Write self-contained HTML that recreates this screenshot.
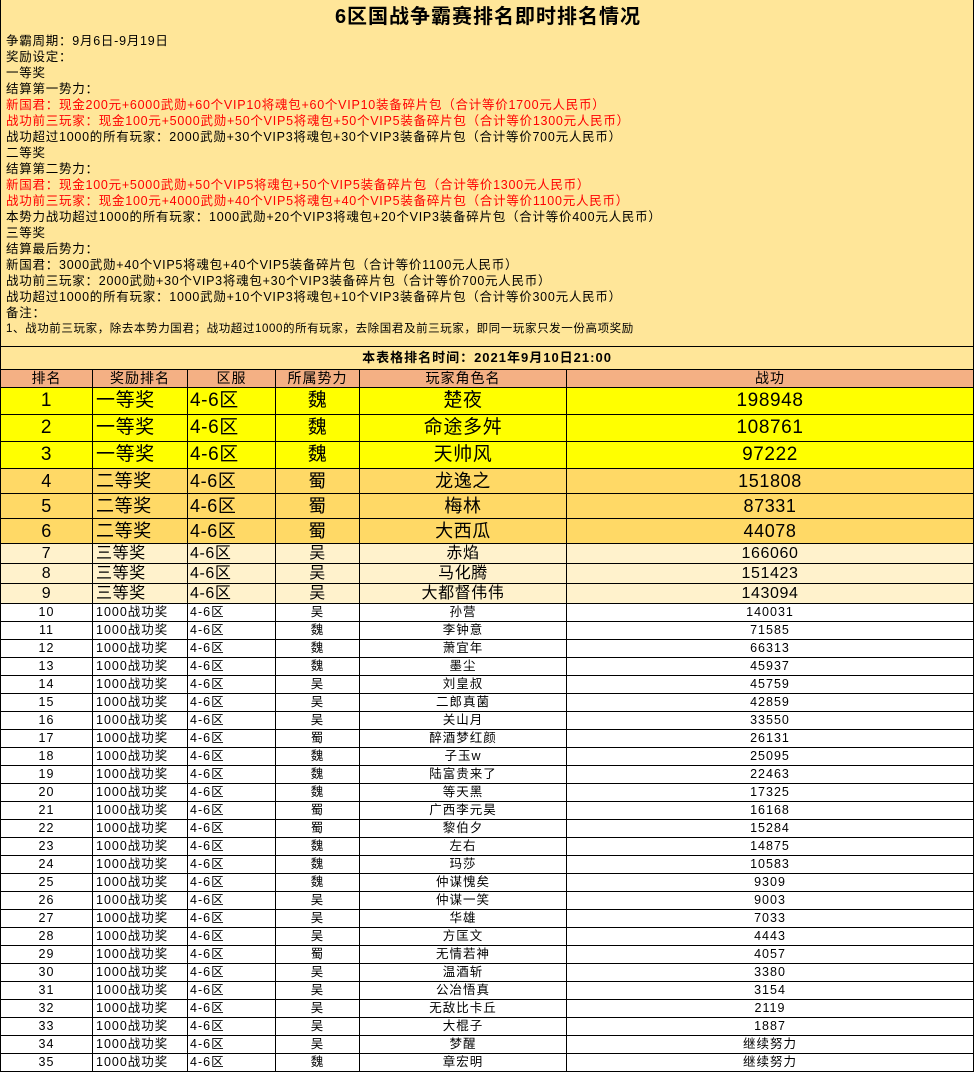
<!DOCTYPE html>
<html><head><meta charset="utf-8">
<style>
*{margin:0;padding:0;box-sizing:border-box}
body{width:977px;height:1076px;background:#fff;font-family:"Liberation Sans","Noto Sans CJK SC",sans-serif;color:#000;position:relative;overflow:hidden}
#top{position:absolute;left:0;top:0;width:974px;height:347px;background:#FFE699;border-left:1px solid #000;border-right:1px solid #000;border-bottom:1px solid #000}
#title{position:absolute;left:0;width:974px;top:4px;text-align:center;font-weight:bold;font-size:20px;line-height:26px;letter-spacing:1px}
.ln{position:absolute;left:5px;font-size:12.5px;line-height:16px;white-space:nowrap;letter-spacing:0.75px}
.r{color:#f00}
#tt{position:absolute;left:0;top:347px;width:974px;height:22px;background:#FFE699;border-left:1px solid #000;border-right:1px solid #000;text-align:center;font-weight:bold;font-size:13px;line-height:22px;letter-spacing:1px}
.row{position:absolute;left:0;width:974px;display:flex;border-top:1px solid #000;letter-spacing:0.6px}
.row div{border-left:1px solid #000;height:100%;white-space:nowrap;overflow:hidden;text-align:center}
.row div:last-child{border-right:1px solid #000}
.c1{width:92px}.c2{width:95px;text-align:left!important;padding-left:3px}.c3{width:88px;text-align:left!important;padding-left:2px}.c4{width:84px}.c5{width:207px}.c6{width:408px}
.h{background:#F4B084;font-size:14px;line-height:17px;letter-spacing:1px}
.y{background:#FFFF00;font-size:19px;line-height:26px}
.o{background:#FFD966;font-size:18px;line-height:24px}
.l{background:#FFF2CC;font-size:16px;line-height:19px}
.w{background:#fff;font-size:12.5px;line-height:17px;letter-spacing:1px}
</style></head><body>
<div id="top">
<div id="title">6区国战争霸赛排名即时排名情况</div>
<div class="ln" style="top:33px">争霸周期：9月6日-9月19日</div>
<div class="ln" style="top:49px">奖励设定：</div>
<div class="ln" style="top:65px">一等奖</div>
<div class="ln" style="top:81px">结算第一势力：</div>
<div class="ln r" style="top:97px">新国君：现金200元+6000武勋+60个VIP10将魂包+60个VIP10装备碎片包（合计等价1700元人民币）</div>
<div class="ln r" style="top:113px">战功前三玩家：现金100元+5000武勋+50个VIP5将魂包+50个VIP5装备碎片包（合计等价1300元人民币）</div>
<div class="ln" style="top:129px">战功超过1000的所有玩家：2000武勋+30个VIP3将魂包+30个VIP3装备碎片包（合计等价700元人民币）</div>
<div class="ln" style="top:145px">二等奖</div>
<div class="ln" style="top:161px">结算第二势力：</div>
<div class="ln r" style="top:177px">新国君：现金100元+5000武勋+50个VIP5将魂包+50个VIP5装备碎片包（合计等价1300元人民币）</div>
<div class="ln r" style="top:193px">战功前三玩家：现金100元+4000武勋+40个VIP5将魂包+40个VIP5装备碎片包（合计等价1100元人民币）</div>
<div class="ln" style="top:209px">本势力战功超过1000的所有玩家：1000武勋+20个VIP3将魂包+20个VIP3装备碎片包（合计等价400元人民币）</div>
<div class="ln" style="top:225px">三等奖</div>
<div class="ln" style="top:241px">结算最后势力：</div>
<div class="ln" style="top:257px">新国君：3000武勋+40个VIP5将魂包+40个VIP5装备碎片包（合计等价1100元人民币）</div>
<div class="ln" style="top:273px">战功前三玩家：2000武勋+30个VIP3将魂包+30个VIP3装备碎片包（合计等价700元人民币）</div>
<div class="ln" style="top:289px">战功超过1000的所有玩家：1000武勋+10个VIP3将魂包+10个VIP3装备碎片包（合计等价300元人民币）</div>
<div class="ln" style="top:305px">备注：</div>
<div class="ln" style="top:321px;font-size:11.5px;letter-spacing:0.6px">1、战功前三玩家，除去本势力国君；战功超过1000的所有玩家，去除国君及前三玩家，即同一玩家只发一份高项奖励</div>
</div>
<div id="tt">本表格排名时间：2021年9月10日21:00</div>

<div class="row h" style="top:369px;height:19px"><div class="c1">排名</div><div class="c2" style="text-align:center!important;padding:0">奖励排名</div><div class="c3" style="text-align:center!important;padding:0">区服</div><div class="c4">所属势力</div><div class="c5">玩家角色名</div><div class="c6">战功</div></div>

<div class="row y" style="top:387px;height:28px"><div class="c1">1</div><div class="c2">一等奖</div><div class="c3">4-6区</div><div class="c4">魏</div><div class="c5">楚夜</div><div class="c6">198948</div></div>
<div class="row y" style="top:414px;height:28px"><div class="c1">2</div><div class="c2">一等奖</div><div class="c3">4-6区</div><div class="c4">魏</div><div class="c5">命途多舛</div><div class="c6">108761</div></div>
<div class="row y" style="top:441px;height:28px"><div class="c1">3</div><div class="c2">一等奖</div><div class="c3">4-6区</div><div class="c4">魏</div><div class="c5">天帅风</div><div class="c6">97222</div></div>
<div class="row o" style="top:468px;height:26px"><div class="c1">4</div><div class="c2">二等奖</div><div class="c3">4-6区</div><div class="c4">蜀</div><div class="c5">龙逸之</div><div class="c6">151808</div></div>
<div class="row o" style="top:493px;height:26px"><div class="c1">5</div><div class="c2">二等奖</div><div class="c3">4-6区</div><div class="c4">蜀</div><div class="c5">梅林</div><div class="c6">87331</div></div>
<div class="row o" style="top:518px;height:26px"><div class="c1">6</div><div class="c2">二等奖</div><div class="c3">4-6区</div><div class="c4">蜀</div><div class="c5">大西瓜</div><div class="c6">44078</div></div>
<div class="row l" style="top:543px;height:21px"><div class="c1">7</div><div class="c2">三等奖</div><div class="c3">4-6区</div><div class="c4">吴</div><div class="c5">赤焰</div><div class="c6">166060</div></div>
<div class="row l" style="top:563px;height:21px"><div class="c1">8</div><div class="c2">三等奖</div><div class="c3">4-6区</div><div class="c4">吴</div><div class="c5">马化腾</div><div class="c6">151423</div></div>
<div class="row l" style="top:583px;height:21px"><div class="c1">9</div><div class="c2">三等奖</div><div class="c3">4-6区</div><div class="c4">吴</div><div class="c5">大都督伟伟</div><div class="c6">143094</div></div>

<div class="row w" style="top:603px;height:19px"><div class="c1">10</div><div class="c2">1000战功奖</div><div class="c3">4-6区</div><div class="c4">吴</div><div class="c5">孙营</div><div class="c6">140031</div></div>
<div class="row w" style="top:621px;height:19px"><div class="c1">11</div><div class="c2">1000战功奖</div><div class="c3">4-6区</div><div class="c4">魏</div><div class="c5">李钟意</div><div class="c6">71585</div></div>
<div class="row w" style="top:639px;height:19px"><div class="c1">12</div><div class="c2">1000战功奖</div><div class="c3">4-6区</div><div class="c4">魏</div><div class="c5">萧宜年</div><div class="c6">66313</div></div>
<div class="row w" style="top:657px;height:19px"><div class="c1">13</div><div class="c2">1000战功奖</div><div class="c3">4-6区</div><div class="c4">魏</div><div class="c5">墨尘</div><div class="c6">45937</div></div>
<div class="row w" style="top:675px;height:19px"><div class="c1">14</div><div class="c2">1000战功奖</div><div class="c3">4-6区</div><div class="c4">吴</div><div class="c5">刘皇叔</div><div class="c6">45759</div></div>
<div class="row w" style="top:693px;height:19px"><div class="c1">15</div><div class="c2">1000战功奖</div><div class="c3">4-6区</div><div class="c4">吴</div><div class="c5">二郎真菌</div><div class="c6">42859</div></div>
<div class="row w" style="top:711px;height:19px"><div class="c1">16</div><div class="c2">1000战功奖</div><div class="c3">4-6区</div><div class="c4">吴</div><div class="c5">关山月</div><div class="c6">33550</div></div>
<div class="row w" style="top:729px;height:19px"><div class="c1">17</div><div class="c2">1000战功奖</div><div class="c3">4-6区</div><div class="c4">蜀</div><div class="c5">醉酒梦红颜</div><div class="c6">26131</div></div>
<div class="row w" style="top:747px;height:19px"><div class="c1">18</div><div class="c2">1000战功奖</div><div class="c3">4-6区</div><div class="c4">魏</div><div class="c5">子玉w</div><div class="c6">25095</div></div>
<div class="row w" style="top:765px;height:19px"><div class="c1">19</div><div class="c2">1000战功奖</div><div class="c3">4-6区</div><div class="c4">魏</div><div class="c5">陆富贵来了</div><div class="c6">22463</div></div>
<div class="row w" style="top:783px;height:19px"><div class="c1">20</div><div class="c2">1000战功奖</div><div class="c3">4-6区</div><div class="c4">魏</div><div class="c5">等天黑</div><div class="c6">17325</div></div>
<div class="row w" style="top:801px;height:19px"><div class="c1">21</div><div class="c2">1000战功奖</div><div class="c3">4-6区</div><div class="c4">蜀</div><div class="c5">广西李元昊</div><div class="c6">16168</div></div>
<div class="row w" style="top:819px;height:19px"><div class="c1">22</div><div class="c2">1000战功奖</div><div class="c3">4-6区</div><div class="c4">蜀</div><div class="c5">黎伯夕</div><div class="c6">15284</div></div>
<div class="row w" style="top:837px;height:19px"><div class="c1">23</div><div class="c2">1000战功奖</div><div class="c3">4-6区</div><div class="c4">魏</div><div class="c5">左右</div><div class="c6">14875</div></div>
<div class="row w" style="top:855px;height:19px"><div class="c1">24</div><div class="c2">1000战功奖</div><div class="c3">4-6区</div><div class="c4">魏</div><div class="c5">玛莎</div><div class="c6">10583</div></div>
<div class="row w" style="top:873px;height:19px"><div class="c1">25</div><div class="c2">1000战功奖</div><div class="c3">4-6区</div><div class="c4">魏</div><div class="c5">仲谋愧矣</div><div class="c6">9309</div></div>
<div class="row w" style="top:891px;height:19px"><div class="c1">26</div><div class="c2">1000战功奖</div><div class="c3">4-6区</div><div class="c4">吴</div><div class="c5">仲谋一笑</div><div class="c6">9003</div></div>
<div class="row w" style="top:909px;height:19px"><div class="c1">27</div><div class="c2">1000战功奖</div><div class="c3">4-6区</div><div class="c4">吴</div><div class="c5">华雄</div><div class="c6">7033</div></div>
<div class="row w" style="top:927px;height:19px"><div class="c1">28</div><div class="c2">1000战功奖</div><div class="c3">4-6区</div><div class="c4">吴</div><div class="c5">方匡文</div><div class="c6">4443</div></div>
<div class="row w" style="top:945px;height:19px"><div class="c1">29</div><div class="c2">1000战功奖</div><div class="c3">4-6区</div><div class="c4">蜀</div><div class="c5">无情若神</div><div class="c6">4057</div></div>
<div class="row w" style="top:963px;height:19px"><div class="c1">30</div><div class="c2">1000战功奖</div><div class="c3">4-6区</div><div class="c4">吴</div><div class="c5">温酒斩</div><div class="c6">3380</div></div>
<div class="row w" style="top:981px;height:19px"><div class="c1">31</div><div class="c2">1000战功奖</div><div class="c3">4-6区</div><div class="c4">吴</div><div class="c5">公冶悟真</div><div class="c6">3154</div></div>
<div class="row w" style="top:999px;height:19px"><div class="c1">32</div><div class="c2">1000战功奖</div><div class="c3">4-6区</div><div class="c4">吴</div><div class="c5">无敌比卡丘</div><div class="c6">2119</div></div>
<div class="row w" style="top:1017px;height:19px"><div class="c1">33</div><div class="c2">1000战功奖</div><div class="c3">4-6区</div><div class="c4">吴</div><div class="c5">大棍子</div><div class="c6">1887</div></div>
<div class="row w" style="top:1035px;height:19px"><div class="c1">34</div><div class="c2">1000战功奖</div><div class="c3">4-6区</div><div class="c4">吴</div><div class="c5">梦醒</div><div class="c6">继续努力</div></div>
<div class="row w" style="top:1053px;height:19px;border-bottom:1px solid #000"><div class="c1">35</div><div class="c2">1000战功奖</div><div class="c3">4-6区</div><div class="c4">魏</div><div class="c5">章宏明</div><div class="c6">继续努力</div></div>
</body></html>
